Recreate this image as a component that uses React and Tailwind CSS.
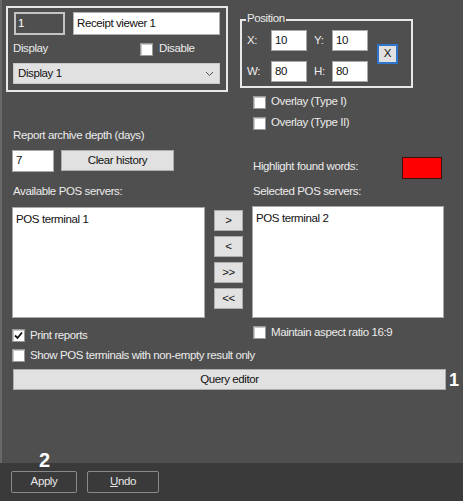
import { useState } from "react";

const Check = ({ checked = false }) => (
    <span className="w-[13px] h-[13px] shrink-0 bg-white border border-[#9a9a9a] shadow-[inset_1px_1px_0_#c9c9c9] flex items-center justify-center">
        {checked && (
            <svg width="9" height="9" viewBox="0 0 9 9">
                <path d="M1 4.5 L3.5 7 L8 1.5" fill="none" stroke="#111" strokeWidth="1.8" />
            </svg>
        )}
    </span>
);

const GrayButton = ({ className = "", children }) => (
    <button className={`bg-[#e1e1e1] border border-[#adadad] text-[#111] flex items-center justify-center leading-none ${className}`}>
        {children}
    </button>
);

const App = () => {
    const [printReports] = useState(true);

    return (
        <div
            className="w-[463px] h-[501px] flex flex-col bg-[#4f4f4f] text-[#ececec] text-[11.5px] tracking-[-0.4px] relative overflow-hidden"
            style={{ fontFamily: '"Liberation Sans", Arial, sans-serif' }}
        >
            <div className="h-[463px] shadow-[inset_2px_0_0_#686868] flex flex-col">
                {/* top area */}
                <div className="flex items-start h-[179px]">
                    {/* left column */}
                    <div className="ml-[6px] mt-[6px] flex flex-col">
                        <div className="w-[222px] h-[86px] border-2 border-[#e8e8e8] pt-[4px] pl-[5px] flex flex-col">
                            <div className="flex gap-[8px] pl-[1px]">
                                <div className="w-[51px] h-[23px] border-2 border-[#c4c4c4] pl-[2px] flex items-center text-white">1</div>
                                <div className="w-[147px] h-[23px] bg-white border border-[#b0b0b0] pl-[3px] flex items-center text-[#111]">
                                    Receipt viewer 1
                                </div>
                            </div>
                            <div className="mt-[7px] h-[14px] flex items-center">
                                <span className="w-[127px]">Display</span>
                                <Check />
                                <span className="ml-[6px]">Disable</span>
                            </div>
                            <div className="mt-[7px] w-[207px] h-[21px] bg-[#e1e1e1] border border-[#c9c9c9] pl-[4px] pr-[5px] flex items-center justify-between text-[#111]">
                                <span>Display 1</span>
                                <svg width="9" height="6" viewBox="0 0 9 6">
                                    <polyline points="1,1 4.5,4.5 8,1" fill="none" stroke="#555" strokeWidth="1" />
                                </svg>
                            </div>
                        </div>
                        <div className="mt-[37px] pl-[7px] leading-[13px]">Report archive depth (days)</div>
                        <div className="mt-[8px] pl-[6px] flex gap-[7px] items-start">
                            <div className="w-[42px] h-[22px] bg-white border border-[#a8a8a8] pl-[3px] flex items-center text-[#111]">7</div>
                            <GrayButton className="w-[113px] h-[21px]">Clear history</GrayButton>
                        </div>
                    </div>

                    {/* right column */}
                    <div className="ml-[12px] flex flex-col">
                        <div className="mt-[19px] w-[173px] h-[69px] border-2 border-[#e8e8e8] relative pt-[9px] pl-[5px] flex items-start">
                            <span className="absolute left-[4px] top-[-9px] px-[1px] bg-[#4f4f4f] leading-[13px]">Position</span>
                            <div className="grid grid-cols-[24px_36px_25px_36px] gap-y-[10px] items-center">
                                <span>X:</span>
                                <div className="h-[21px] bg-white border border-[#a8a8a8] pl-[3px] flex items-center text-[#111]">10</div>
                                <span className="pl-[7px]">Y:</span>
                                <div className="h-[21px] bg-white border border-[#a8a8a8] pl-[3px] flex items-center text-[#111]">10</div>
                                <span>W:</span>
                                <div className="h-[21px] bg-white border border-[#a8a8a8] pl-[3px] flex items-center text-[#111]">80</div>
                                <span className="pl-[7px]">H:</span>
                                <div className="h-[21px] bg-white border border-[#a8a8a8] pl-[3px] flex items-center text-[#111]">80</div>
                            </div>
                            <button className="ml-[9px] mt-[14px] w-[21px] h-[20px] bg-[#e1e1e1] border-2 border-[#2f75cc] text-[#111] flex items-center justify-center leading-none">
                                X
                            </button>
                        </div>
                        <div className="mt-[7px] pl-[13px] h-[14px] flex items-center">
                            <Check />
                            <span className="ml-[5px]">Overlay (Type I)</span>
                        </div>
                        <div className="mt-[7px] pl-[13px] h-[14px] flex items-center">
                            <Check />
                            <span className="ml-[5px]">Overlay (Type II)</span>
                        </div>
                        <div className="mt-[27px] pl-[13px] w-[202px] h-[22px] flex items-center justify-between">
                            <span className="mt-[-2px]">Highlight found words:</span>
                            <div className="w-[40px] h-[22px] bg-[#ff0000] border border-[#3a1010]" />
                        </div>
                    </div>
                </div>

                {/* list labels */}
                <div className="mt-[6px] pl-[13px] flex leading-[13px]">
                    <span className="w-[240px]">Available POS servers:</span>
                    <span>Selected POS servers:</span>
                </div>

                {/* lists */}
                <div className="mt-[8px] flex items-start">
                    <div className="ml-[12px] mt-[1px] w-[193px] h-[111px] bg-white border border-[#a8a8a8] px-[3px] pt-[3px] text-[#111]">
                        POS terminal 1
                    </div>
                    <div className="ml-[9px] mt-[4px] flex flex-col gap-[5px]">
                        <GrayButton className="w-[29px] h-[21px]">&gt;</GrayButton>
                        <GrayButton className="w-[29px] h-[21px]">&lt;</GrayButton>
                        <GrayButton className="w-[29px] h-[21px]">&gt;&gt;</GrayButton>
                        <GrayButton className="w-[29px] h-[21px]">&lt;&lt;</GrayButton>
                    </div>
                    <div className="ml-[9px] w-[192px] h-[112px] bg-white border border-[#a8a8a8] px-[3px] pt-[3px] text-[#111]">
                        POS terminal 2
                    </div>
                </div>

                {/* options */}
                <div className="mt-[8px] flex items-start">
                    <div className="ml-[12px] mt-[3px] w-[241px] h-[13px] flex items-center">
                        <Check checked={printReports} />
                        <span className="ml-[5px]">Print reports</span>
                    </div>
                    <div className="h-[13px] flex items-center">
                        <Check />
                        <span className="ml-[5px]">Maintain aspect ratio 16:9</span>
                    </div>
                </div>
                <div className="mt-[7px] ml-[12px] h-[13px] flex items-center">
                    <Check />
                    <span className="ml-[5px]">Show POS terminals with non-empty result only</span>
                </div>
                <div className="mt-[7px] ml-[13px] flex items-center">
                    <GrayButton className="w-[433px] h-[21px]">Query editor</GrayButton>
                    <span className="ml-[3px] text-[18px] font-bold text-white leading-none tracking-normal">1</span>
                </div>
            </div>

            {/* bottom bar */}
            <div className="h-[38px] bg-[#3b3a3b] pt-[8px] pl-[11px] flex items-start gap-[10px]">
                <button className="w-[66px] h-[22px] border border-[#8a8a8a] rounded-[2px] text-[#e6e6e6] flex items-center justify-center">
                    Apply
                </button>
                <button className="w-[72px] h-[22px] border border-[#8a8a8a] rounded-[2px] text-[#e6e6e6] flex items-center justify-center">
                    <span className="underline">U</span>ndo
                </button>
            </div>

            <span className="absolute left-[39px] top-[450px] text-[20px] font-bold text-white leading-none tracking-normal">
                2
            </span>
        </div>
    );
};

export default App;
